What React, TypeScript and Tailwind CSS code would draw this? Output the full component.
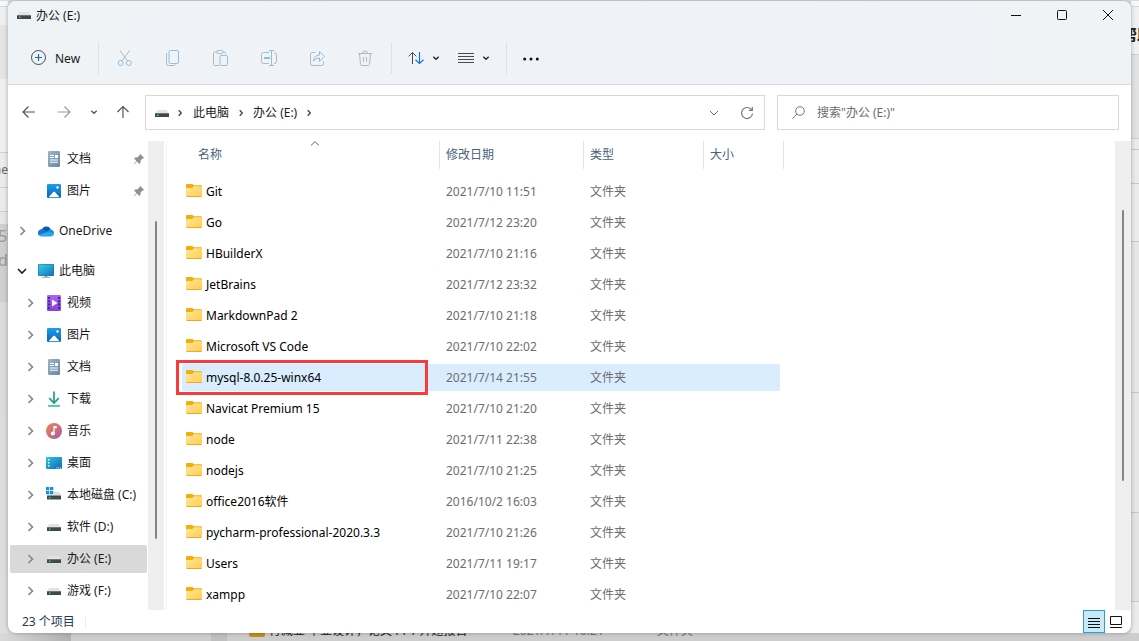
import React from "react";

type IconProps = { className?: string };

function Drive({ className = "" }: IconProps) {
  return (
    <svg width="16" height="16" viewBox="0 0 16 16" className={`shrink-0 ${className}`} aria-hidden="true">
      <path d="M3.400 5h9.200L15 8.500H1z" fill="#e3e4e6" />
      <path d="M1 8h14v4H1z" fill="#44474a" />
      <path d="M1 8h14v1H1z" fill="#6f7376" />
      <path d="M3 9.500h1.500v1.500H3z" fill="#2fe04c" />
    </svg>
  );
}

function SystemDrive() {
  return (
    <svg width="16" height="16" viewBox="0 0 16 16" className="shrink-0" aria-hidden="true">
      <path d="M5 5h8l2 3.500H1z" fill="#dcdddf" />
      <path d="M1 8.500h14v4H1z" fill="#44474a" />
      <path d="M3 10h1.500v1.500H3z" fill="#2fe04c" />
      <path d="M0 0h8v7.500H0z" fill="#fff" />
      <path d="M0 0h3.300v3.300H0zM4 0h3.300v3.300H4zM0 4h3.300v3.300H0zM4 4h3.300v3.300H4z" fill="#1b8fdb" />
    </svg>
  );
}

function Folder() {
  return (
    <svg width="16" height="16" viewBox="0 0 16 16" className="shrink-0" aria-hidden="true">
      <defs>
        <linearGradient id="folder" x1="0" y1="0" x2="1" y2="1">
          <stop offset="0" stopColor="#ffe9a0" />
          <stop offset="1" stopColor="#ffcc48" />
        </linearGradient>
      </defs>
      <path d="M0 1.200C0 .5.5 0 1.200 0h5.100l1.700 1.200h6.800c.7 0 1.200.5 1.200 1.200V6H0z" fill="#f2af0c" />
      <path d="M0 5c0-.6.4-1 1-1h5.300l1.700-1.800H15c.6 0 1 .4 1 1V12c0 .6-.4 1-1 1H1c-.6 0-1-.4-1-1z" fill="url(#folder)" />
      <path d="M.3 12.200h15.400c-.2.5-.5.8-1 .8H1.300c-.5 0-.8-.3-1-.8z" fill="#e39c1c" />
    </svg>
  );
}

function DocumentIcon() {
  return (
    <svg width="16" height="16" viewBox="0 0 16 16" className="shrink-0" aria-hidden="true">
      <defs>
        <linearGradient id="doc" x1="0" y1="0" x2="1" y2="1">
          <stop offset="0" stopColor="#a3b6c8" />
          <stop offset="1" stopColor="#6685a3" />
        </linearGradient>
      </defs>
      <rect x="2" y="0" width="12" height="16" rx="1.2" fill="url(#doc)" />
      <path d="M4 4h4v1H4zM4 6h4v1H4zM9 4h3v3H9zM4 8.500h8v1H4zM4 10.800h8v1H4z" fill="#fff" />
    </svg>
  );
}

function PictureIcon() {
  return (
    <svg width="16" height="16" viewBox="0 0 16 16" className="shrink-0" aria-hidden="true">
      <defs>
        <linearGradient id="pic" x1="0" y1="0" x2="0" y2="1">
          <stop offset="0" stopColor="#1aa0ea" />
          <stop offset="1" stopColor="#0b62b5" />
        </linearGradient>
      </defs>
      <rect x="1" y="1" width="14" height="14" rx="1.200" fill="url(#pic)" />
      <path d="M2.500 14.300 7.300 9q.8-.8 1.600 0l4.700 5.300z" fill="#fff" />
      <circle cx="11.500" cy="4.500" r="1.200" fill="#fff" />
    </svg>
  );
}

function OneDriveIcon() {
  return (
    <svg width="16" height="16" viewBox="0 0 16 16" className="shrink-0" aria-hidden="true">
      <path d="M3.800 7A4.700 4.700 0 0 1 12.700 6.500L9 11z" fill="#0a57ad" />
      <path d="M3.700 6.300C1.600 6.300 0 8 0 10c0 1 .4 1.900 1 2.600L10 9 6.400 7C5.600 6.500 4.700 6.300 3.700 6.300z" fill="#0f78d4" />
      <path d="M9 8.500c.7-1.300 2-2.100 3.500-2.100 2 0 3.500 1.600 3.500 3.500L12 11z" fill="#1490df" />
      <path d="M1 12.500 9.600 8.800 15.900 9.900c.4 2-1 3.600-3 3.600H3.700c-1.100 0-2-.3-2.700-1z" fill="#28a8ea" />
    </svg>
  );
}

function ComputerIcon() {
  return (
    <svg width="16" height="16" viewBox="0 0 16 16" className="shrink-0" aria-hidden="true">
      <defs>
        <linearGradient id="pc" x1="0" y1="0" x2="1" y2="1">
          <stop offset="0" stopColor="#34d3e0" />
          <stop offset="1" stopColor="#1273c4" />
        </linearGradient>
      </defs>
      <path d="M6.500 12h3v2.300h-3z" fill="#8fa0ae" />
      <path d="M4 14h8v1H4z" fill="#a9b5be" />
      <rect x="0" y="1" width="16" height="12" rx="1" fill="#2f6d92" />
      <rect x=".6" y="1.600" width="14.800" height="10.800" rx=".5" fill="url(#pc)" />
    </svg>
  );
}

function VideoIcon() {
  return (
    <svg width="16" height="16" viewBox="0 0 16 16" className="shrink-0" aria-hidden="true">
      <defs>
        <linearGradient id="vid" x1="0" y1="0" x2="0" y2="1">
          <stop offset="0" stopColor="#b064ef" />
          <stop offset="1" stopColor="#8443dd" />
        </linearGradient>
      </defs>
      <rect x="1" y="0" width="14" height="16" rx="1.200" fill="url(#vid)" />
      <path d="M2 2h2v2H2zM2 5.300h2v2H2zM2 8.600h2v2H2zM2 12h2v2H2zM12 2h2v2h-2zM12 5.300h2v2h-2zM12 8.600h2v2h-2zM12 12h2v2h-2z" fill="#4c2391" />
      <path d="M6 4.500v7L11.500 8z" fill="#fff" />
    </svg>
  );
}

function DownloadIcon() {
  return (
    <svg width="16" height="16" viewBox="0 0 16 16" className="shrink-0" aria-hidden="true">
      <path d="M8 .5v11M3.200 7.200 8 12l4.800-4.800" stroke="#16a37f" strokeWidth="1.700" fill="none" />
      <path d="M2 14.200h12v1.500H2z" fill="#25bd84" />
    </svg>
  );
}

function MusicIcon() {
  return (
    <svg width="16" height="16" viewBox="0 0 16 16" className="shrink-0" aria-hidden="true">
      <defs>
        <linearGradient id="music" x1="0" y1="0" x2="1" y2="1">
          <stop offset="0" stopColor="#ef8550" />
          <stop offset="1" stopColor="#ae59a4" />
        </linearGradient>
      </defs>
      <circle cx="8" cy="8" r="8" fill="url(#music)" />
      <path d="M8 3v7" stroke="#fff" strokeWidth="1.200" />
      <path d="M8 3h2.800v2.200H8z" fill="#fff" />
      <circle cx="6.800" cy="10.500" r="2" fill="#fff" />
    </svg>
  );
}

function DesktopIcon() {
  return (
    <svg width="16" height="16" viewBox="0 0 16 16" className="shrink-0" aria-hidden="true">
      <defs>
        <linearGradient id="desk" x1="0" y1="0" x2="1" y2="1">
          <stop offset="0" stopColor="#2cc7dd" />
          <stop offset="1" stopColor="#0e67bd" />
        </linearGradient>
      </defs>
      <rect x="0" y="2" width="16" height="12" rx="1" fill="url(#desk)" />
      <path d="M2 4h1.500v1.500H2zM2 7h1.500v1.500H2zM2 10h1.500v1.500H2zM10.500 12.500h1v1h-1zM12.300 12.500h1v1h-1zM14 12.500h1v1h-1z" fill="#fff" />
    </svg>
  );
}

function Pin() {
  return (
    <svg width="12" height="12" viewBox="0 0 12 12" className="shrink-0" aria-hidden="true">
      <path d="M7 .8 11.200 5l-1.600.6-1.900 1.900-.3 2.600-1 .8L3.900 8.600.8 11.500.5 11.200 3.400 8.100 1.100 5.600l.8-1 2.600-.3 1.900-1.900z" fill="#87929b" />
    </svg>
  );
}

function Chevron({ dir, className = "" }: { dir: "right" | "down"; className?: string }) {
  const paths = { right: "M4.500 2 8.500 6l-4 4", down: "M2 4l4 4 4-4" };
  return (
    <svg width="12" height="12" viewBox="0 0 12 12" fill="none" stroke="currentColor" className={`shrink-0 ${className}`} aria-hidden="true">
      <path d={paths[dir]} />
    </svg>
  );
}

function SmallChevron({ dir, className = "" }: { dir: "right" | "down"; className?: string }) {
  return (
    <svg width="8" height="8" viewBox="0 0 8 8" fill="none" stroke="currentColor" strokeWidth="1.300" className={`shrink-0 ${className}`} aria-hidden="true">
      <path d={dir === "down" ? "M1.300 2.700 4 5.300l2.700-2.600" : "M2.700 1.300 5.300 4 2.700 6.700"} />
    </svg>
  );
}

function Tool({ label, children }: { label: string; children: React.ReactNode }) {
  return (
    <button aria-label={label} disabled className="flex h-8 w-12 items-center justify-center">
      <svg width="18" height="18" viewBox="0 0 18 18" fill="none" stroke="#b3b8bc" aria-hidden="true">
        {children}
      </svg>
    </button>
  );
}

function Divider() {
  return <span className="h-8 w-px shrink-0 bg-[#dde1e4]" />;
}

type Place = { name: string; icon: React.ReactNode; level: 0 | 1; state?: "open" | "closed"; pinned?: boolean; current?: boolean };

const groups: Place[][] = [
  [
    { name: "文档", icon: <DocumentIcon />, level: 1, pinned: true },
    { name: "图片", icon: <PictureIcon />, level: 1, pinned: true },
  ],
  [{ name: "OneDrive", icon: <OneDriveIcon />, level: 0, state: "closed" }],
  [
    { name: "此电脑", icon: <ComputerIcon />, level: 0, state: "open" },
    { name: "视频", icon: <VideoIcon />, level: 1, state: "closed" },
    { name: "图片", icon: <PictureIcon />, level: 1, state: "closed" },
    { name: "文档", icon: <DocumentIcon />, level: 1, state: "closed" },
    { name: "下载", icon: <DownloadIcon />, level: 1, state: "closed" },
    { name: "音乐", icon: <MusicIcon />, level: 1, state: "closed" },
    { name: "桌面", icon: <DesktopIcon />, level: 1, state: "closed" },
    { name: "本地磁盘 (C:)", icon: <SystemDrive />, level: 1, state: "closed" },
    { name: "软件 (D:)", icon: <Drive />, level: 1, state: "closed" },
    { name: "办公 (E:)", icon: <Drive />, level: 1, state: "closed", current: true },
    { name: "游戏 (F:)", icon: <Drive />, level: 1, state: "closed" },
  ],
];

const files: { name: string; date: string; selected?: boolean }[] = [
  { name: "Git", date: "2021/7/10 11:51" },
  { name: "Go", date: "2021/7/12 23:20" },
  { name: "HBuilderX", date: "2021/7/10 21:16" },
  { name: "JetBrains", date: "2021/7/12 23:32" },
  { name: "MarkdownPad 2", date: "2021/7/10 21:18" },
  { name: "Microsoft VS Code", date: "2021/7/10 22:02" },
  { name: "mysql-8.0.25-winx64", date: "2021/7/14 21:55", selected: true },
  { name: "Navicat Premium 15", date: "2021/7/10 21:20" },
  { name: "node", date: "2021/7/11 22:38" },
  { name: "nodejs", date: "2021/7/10 21:25" },
  { name: "office2016软件", date: "2016/10/2 16:03" },
  { name: "pycharm-professional-2020.3.3", date: "2021/7/10 21:26" },
  { name: "Users", date: "2021/7/11 19:17" },
  { name: "xampp", date: "2021/7/10 22:07" },
];

function PlaceRow({ place }: { place: Place }) {
  return (
    <li className="flex h-8 items-center pr-px pl-0.5">
      <button
        className={`flex h-7 w-full items-center rounded-xs pr-0.5 ${place.level === 0 ? "pl-1" : "pl-3"} ${place.current ? "bg-[#d9d9d9]" : ""}`}
      >
        <span className="mr-2 flex w-4 justify-center">
          {place.state === "open" && <Chevron dir="down" className="stroke-[1.600] text-[#222]" />}
          {place.state === "closed" && <Chevron dir="right" className="stroke-[1.600] text-[#858585]" />}
        </span>
        {place.icon}
        <span className="ml-[5px] flex-1 text-left whitespace-nowrap">{place.name}</span>
        {place.pinned && <Pin />}
      </button>
    </li>
  );
}

function Sidebar() {
  return (
    <nav className="flex w-39 shrink-0" aria-label="导航窗格">
      <div className="flex min-w-0 flex-1 flex-col gap-2 overflow-hidden pt-0.5">
        {groups.map((group, i) => (
          <ul key={i}>
            {group.map((place) => (
              <PlaceRow key={place.name} place={place} />
            ))}
          </ul>
        ))}
      </div>
      <div className="flex w-4 justify-center bg-[#efefef] pt-20">
        <span className="h-[318px] w-0.5 rounded-full bg-[#858585]" />
      </div>
    </nav>
  );
}

function HeaderCell({ children, first = false }: { children: React.ReactNode; first?: boolean }) {
  return (
    <th className="p-0 align-top font-normal text-[#4c607a]">
      <div className={`relative flex h-7 items-center border-r border-[#e5e5e5] text-left ${first ? "pl-4" : "pl-1.5"}`}>
        {children}
        {first && (
          <svg
            width="10"
            height="5"
            viewBox="0 0 10 5"
            fill="none"
            stroke="#666"
            className="absolute top-0 left-32"
            aria-hidden="true"
          >
            <path d="M1 4.500 5 .7l4 3.800" />
          </svg>
        )}
      </div>
    </th>
  );
}

function FileTable() {
  return (
    <main className="ml-0.5 flex min-w-0 flex-1 border-l border-[#f5f5f5]">
      <div className="min-w-0 flex-1 overflow-hidden pl-[15px]">
        <table className="w-[602px] table-fixed border-collapse">
          <colgroup>
            <col className="w-[258px]" />
            <col className="w-36" />
            <col className="w-30" />
            <col className="w-20" />
          </colgroup>
          <thead>
            <tr className="h-[35px]">
              <HeaderCell first>名称</HeaderCell>
              <HeaderCell>修改日期</HeaderCell>
              <HeaderCell>类型</HeaderCell>
              <HeaderCell>大小</HeaderCell>
            </tr>
          </thead>
          <tbody>
            {files.map((file) => {
              const bg = file.selected ? "bg-[#d9edff]" : "";
              return (
                <tr key={file.name} className="h-[31px] text-[#6d6d6d]">
                  <td className="p-0">
                    <div className={`relative flex h-[27px] items-center gap-1 rounded-l-xs pl-1 text-black ${bg}`}>
                      <Folder />
                      {file.name}
                      {file.selected && (
                        <span className="absolute -top-1 -left-1.5 h-[35px] w-[252px] border-3 border-[#fb3a3a]" />
                      )}
                    </div>
                  </td>
                  <td className="p-0">
                    <div className={`flex h-[27px] items-center pl-1.5 ${bg}`}>{file.date}</div>
                  </td>
                  <td className="p-0">
                    <div className={`flex h-[27px] items-center pl-1.5 ${bg}`}>文件夹</div>
                  </td>
                  <td className="p-0">
                    <div className={`mr-1 h-[27px] rounded-r-xs ${bg}`} />
                  </td>
                </tr>
              );
            })}
          </tbody>
        </table>
      </div>
      <div className="flex w-4 justify-center bg-[#efefef] pt-[69px]">
        <span className="h-[271px] w-0.5 rounded-full bg-[#858585]" />
      </div>
    </main>
  );
}

function TitleBar() {
  return (
    <div className="flex h-7 items-center pl-2">
      <Drive />
      <h1 className="ml-1 flex-1 pt-0.5">办公 (E:)</h1>
      <button aria-label="最小化" className="flex h-7 w-[46px] items-center justify-center">
        <svg width="12" height="12" viewBox="0 0 12 12" stroke="#111" aria-hidden="true">
          <path d="M1 6.500h10" />
        </svg>
      </button>
      <button aria-label="最大化" className="flex h-7 w-[46px] items-center justify-center">
        <svg width="12" height="12" viewBox="0 0 12 12" fill="none" stroke="#111" aria-hidden="true">
          <rect x="1.500" y="1.500" width="9" height="9" rx="1" />
        </svg>
      </button>
      <button aria-label="关闭" className="flex h-7 w-[46px] items-center justify-center">
        <svg width="12" height="12" viewBox="0 0 12 12" stroke="#111" aria-hidden="true">
          <path d="m1 1 10 10M11 1 1 11" />
        </svg>
      </button>
    </div>
  );
}

function Toolbar() {
  return (
    <div className="flex h-14 items-center border-b border-[#d8dce0] pt-[3px] pl-[22px]">
      <button className="mr-[19px] flex h-8 items-center gap-[7px]">
        <svg width="18" height="18" viewBox="0 0 18 18" fill="none" aria-hidden="true">
          <circle cx="8.500" cy="8.500" r="7" stroke="#4a4a4a" />
          <path d="M8.500 5v7M5 8.500h7" stroke="#0f74c4" strokeWidth="1.200" />
        </svg>
        <span className="w-6 pt-0.5 text-left whitespace-nowrap">New</span>
      </button>
      <Divider />
      <div className="mx-0.5 flex">
        <Tool label="剪切">
          <path d="M4 1.500 11.500 12M13.500 1.500 6 12" />
          <circle cx="4.700" cy="14" r="2.500" stroke="#8cc0e8" />
          <circle cx="12.800" cy="14" r="2.500" stroke="#8cc0e8" />
        </Tool>
        <Tool label="复制">
          <path d="M3.500 4 2.500 5v9.500q0 2 2 2h6l1-1" />
          <rect x="5" y="1.500" width="9.500" height="13" rx="1.500" stroke="#8cc0e8" />
        </Tool>
        <Tool label="粘贴">
          <path d="M5 3H2.500q-1 0-1 1v11.500q0 1 1 1H7M11 3h1.500q1 0 1 1v1" />
          <rect x="5" y="1.500" width="6" height="3" rx="1.200" />
          <rect x="8" y="6.500" width="7.500" height="10" rx="1" stroke="#8cc0e8" />
        </Tool>
        <Tool label="重命名">
          <path d="M9 3.500H3.500q-2 0-2 2v7q0 2 2 2H9M14 3.500q2.500 0 2.500 2v7q0 2-2.500 2" />
          <path d="M11.500 2v14M9 1.500h5M9 16.500h5" stroke="#8cc0e8" />
          <path d="M4 9h6" stroke="#8cc0e8" strokeWidth="2" />
        </Tool>
        <Tool label="共享">
          <path d="M7.500 3.500h-3q-2 0-2 2v9q0 2 2 2h9q2 0 2-2v-2" />
          <path d="M5.500 12q.5-5.500 6-6V2.500l5 5-5 5V9Q8 9 5.500 12z" stroke="#8cc0e8" strokeLinejoin="round" />
        </Tool>
        <Tool label="删除">
          <path d="M2 4.500h14M6.500 4.500q0-2.500 2.500-2.500t2.500 2.500M3.500 4.500l1 11q.2 1 1.200 1h6.600q1 0 1.200-1l1-11M7.500 8v5M10.500 8v5" />
        </Tool>
      </div>
      <Divider />
      <button aria-label="排序" className="ml-4 flex h-8 items-center gap-[7px]">
        <svg width="17" height="16" viewBox="0 0 17 16" fill="none" aria-hidden="true">
          <path d="M4.500 14V2.500M.7 6.300l3.800-3.800 3.800 3.800" stroke="#4a4a4a" />
          <path d="M11.500 2v11.500M7.500 9.700l4 3.800 4-3.800" stroke="#0f7bd4" strokeWidth="1.200" />
        </svg>
        <SmallChevron dir="down" className="text-[#222]" />
      </button>
      <button aria-label="查看" className="ml-[18px] flex h-8 items-center gap-2">
        <svg width="16" height="16" viewBox="0 0 16 16" stroke="#4a4a4a" aria-hidden="true">
          <path d="M0 3.500h16M0 6.500h16M0 9.500h16M0 12.500h16" />
        </svg>
        <SmallChevron dir="down" className="text-[#222]" />
      </button>
      <span className="ml-4 flex">
        <Divider />
      </span>
      <button aria-label="更多" className="ml-4 flex h-8 items-center pt-0.5">
        <svg width="16" height="4" viewBox="0 0 16 4" fill="#111" aria-hidden="true">
          <circle cx="1.700" cy="2" r="1.500" />
          <circle cx="8" cy="2" r="1.500" />
          <circle cx="14.300" cy="2" r="1.500" />
        </svg>
      </button>
    </div>
  );
}

function Arrow({ d, label, color }: { d: string; label: string; color: string }) {
  return (
    <button aria-label={label} className="flex h-8 w-4 items-center justify-center">
      <svg width="14" height="14" viewBox="0 0 14 14" fill="none" stroke={color} strokeWidth="1.200" className="shrink-0" aria-hidden="true">
        <path d={d} />
      </svg>
    </button>
  );
}

function AddressRow() {
  return (
    <div className="flex h-14 shrink-0 pt-2.5 pr-3 pl-[13px]">
      <div className="mr-3.5 flex h-[34px] shrink-0 items-center">
        <Arrow label="后退" color="#555" d="M13 7H1.500M6.500 1.500 1 7l5.500 5.500" />
        <span className="ml-[19px] flex">
          <Arrow label="前进" color="#999" d="M1 7h11.500M7.500 1.500 13 7l-5.500 5.500" />
        </span>
        <button aria-label="最近浏览的位置" className="ml-[18px] flex h-8 items-center">
          <SmallChevron dir="down" className="text-[#555]" />
        </button>
        <span className="ml-[17px] flex">
          <Arrow label="向上" color="#555" d="M7 13V1.500M1.500 7 7 1.500 12.500 7" />
        </span>
      </div>
      <div className="flex h-[35px] min-w-0 flex-1 items-center border border-[#d9d9d9] pr-2.5 pl-2">
        <Drive />
        <SmallChevron dir="right" className="mx-1.5 text-[#444]" />
        <button className="ml-[3px]">此电脑</button>
        <SmallChevron dir="right" className="mx-2 text-[#444]" />
        <button>办公 (E:)</button>
        <SmallChevron dir="right" className="mx-2 text-[#444]" />
        <button aria-label="展开" className="mr-5 ml-auto">
          <Chevron dir="down" className="text-[#666]" />
        </button>
        <button aria-label="刷新">
          <svg width="14" height="14" viewBox="0 0 14 14" fill="none" stroke="#777" strokeWidth="1.200" aria-hidden="true">
            <path d="M12.500 7.500A5.500 5.500 0 1 1 11 3.200l1.300 1.200M12.300 1v3.500H8.800" />
          </svg>
        </button>
      </div>
      <label className="ml-3 flex h-[35px] w-[342px] items-center border border-[#d9d9d9] pl-3.5">
        <svg width="13" height="13" viewBox="0 0 13 13" fill="none" stroke="#777" className="shrink-0" aria-hidden="true">
          <circle cx="8" cy="5" r="4.300" />
          <path d="M5 8 .5 12.500" />
        </svg>
        <input
          aria-label="搜索"
          placeholder={'搜索"办公 (E:)"'}
          className="ml-3 min-w-0 flex-1 bg-transparent outline-none placeholder:text-[#6d6d6d]"
        />
      </label>
    </div>
  );
}

function StatusBar() {
  return (
    <footer className="flex h-[23px] shrink-0 items-center pr-2 pl-3.5 text-[#1e395b]">
      <span>23 个项目</span>
      <span className="ml-2.5 h-3 w-px bg-[#ededed]" />
      <button aria-label="详细信息" className="ml-auto flex h-[23px] w-[22px] items-center justify-center border border-[#26a0da] bg-[#cbe8f6]">
        <svg width="14" height="14" viewBox="0 0 14 14" stroke="#111" aria-hidden="true">
          <path d="M1 3.500h12M1 6.500h12M1 9.500h12M1 12.500h12" />
        </svg>
      </button>
      <button aria-label="大缩略图" className="ml-1 flex items-center">
        <svg width="14" height="14" viewBox="0 0 14 14" fill="none" stroke="#111" aria-hidden="true">
          <path d="M1.500 1.500h11v8h-11zM1 12.500h12" />
        </svg>
      </button>
    </footer>
  );
}

function LeftBackdrop() {
  return (
    <div className="flex flex-col overflow-hidden bg-linear-to-b from-[#d8d8d8] to-[#dedede]">
      <div className="h-1.5 shrink-0 border-b border-[#d5d5d5] bg-[#f8f8f8]" />
      <div className="h-[18px] shrink-0 bg-[#efefef]" />
      <div className="h-[54px] shrink-0 bg-[#e4e4e4]" />
      <div className="h-[74px] shrink-0 border-b border-[#d0d0d0] bg-[#eeefef]" />
      <div className="flex h-[35px] shrink-0 items-center justify-end border-b border-[#d0d0d0] bg-[#ebebeb] text-[#666]">ne</div>
      <div className="h-6 shrink-0 border-b border-[#d0d0d0] bg-[#ebebeb]" />
      <div className="h-3 shrink-0 bg-[#e6e6e6]" />
      <div className="flex h-[78px] shrink-0 flex-col bg-[#cfcfcf] text-base text-[#999]">
        <span className="-ml-0.5">50</span>
        <span className="-ml-0.5">d</span>
      </div>
    </div>
  );
}

function RightBackdrop() {
  return (
    <div className="flex flex-col overflow-hidden bg-[#ebebeb]">
      <div className="h-1.5 shrink-0 border-b border-[#d5d5d5] bg-[#f8f8f8]" />
      <div className="flex h-12 shrink-0 items-center border-b border-[#d0d0d0] bg-[#f0f0f0] pt-2 text-base font-bold whitespace-nowrap text-[#222]">
        <span className="-ml-2.5">帮助</span>
      </div>
      <div className="h-[84px] shrink-0 border-b border-[#d0d0d0] bg-[#e1e1e1]" />
      <div className="h-[11px] shrink-0 border-b border-[#c8c8c8]" />
      <div className="h-[34px] shrink-0 border-b border-[#c8c8c8]" />
      <div className="h-[58px] shrink-0 border-b border-[#c8c8c8]" />
      <div className="h-[151px] shrink-0 border-b border-[#c8c8c8] bg-[#e6e6e6]" />
      <div className="h-[120px] shrink-0 border-b border-[#c8c8c8] bg-[#e6e6e6]" />
      <div className="h-[89px] shrink-0 border-b border-[#c8c8c8] bg-[#e3e3e3]" />
    </div>
  );
}

function BottomBackdrop() {
  return (
    <div className="col-span-3 flex h-2 items-end overflow-hidden bg-[#cdcdcd] text-xs leading-3">
      <span className="h-2 w-[71px] shrink-0 bg-linear-to-r from-[#dadada] to-[#b0b0b0]" />
      <span className="ml-[140px] h-2 w-4 shrink-0 bg-[#bfbfbf]" />
      <span className="mb-1 ml-[22px] h-3 w-4 shrink-0 rounded-xs bg-[#c98d1b]" />
      <span className="mb-1 ml-1 w-[244px] shrink-0 whitespace-nowrap text-[#222]">行减业 毕业设计，论文 PPT 开题报告</span>
      <span className="mb-1 w-36 shrink-0 text-[#777]">2021/7/11 10:21</span>
      <span className="mb-1 shrink-0 text-[#777]">文件夹</span>
    </div>
  );
}

export default function App() {
  return (
    <div className="grid h-screen grid-cols-[8px_minmax(0,1fr)_8px] grid-rows-[minmax(0,1fr)_8px] overflow-hidden bg-[#dcdcdc] pt-px font-['Noto_Sans','Noto_Sans_CJK_SC',sans-serif] text-xs text-[#1a1a1a]">
      <LeftBackdrop />
      <div className="z-10 flex min-h-0 flex-col overflow-hidden rounded-lg bg-white shadow-[0_0_4px_rgba(0,0,0,0.3)]">
        <header className="shrink-0 bg-linear-to-r from-[#eff3f6] via-[#f0f2f7] to-[#eff3f6]">
          <TitleBar />
          <Toolbar />
        </header>
        <AddressRow />
        <div className="flex min-h-0 flex-1">
          <Sidebar />
          <FileTable />
        </div>
        <StatusBar />
      </div>
      <RightBackdrop />
      <BottomBackdrop />
    </div>
  );
}
